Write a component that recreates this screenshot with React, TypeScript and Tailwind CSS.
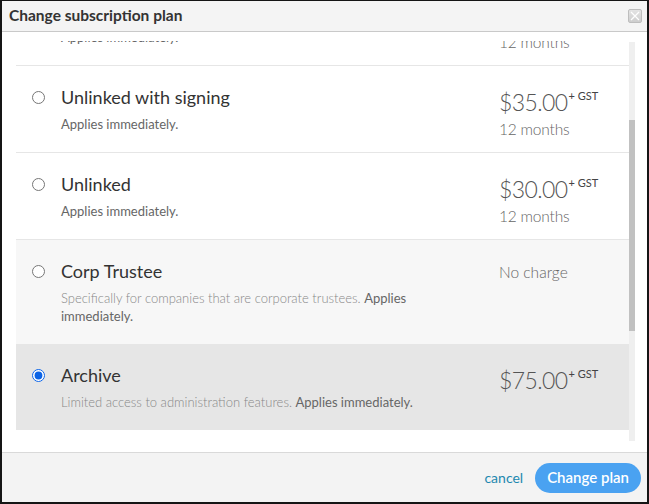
import { useLayoutEffect, useRef } from 'react';

type Plan = {
    id: string;
    name: string;
    description?: string;
    price?: string;
    term?: string;
};

const plans: Plan[] = [
    { id: 'linked-signing', name: 'Linked with signing', price: '$45.00', term: '12 months' },
    { id: 'linked', name: 'Linked', price: '$40.00', term: '12 months' },
    { id: 'unlinked-signing', name: 'Unlinked with signing', price: '$35.00', term: '12 months' },
    { id: 'unlinked', name: 'Unlinked', price: '$30.00', term: '12 months' },
    {
        id: 'corp-trustee',
        name: 'Corp Trustee',
        description: 'Specifically for companies that are corporate trustees.',
    },
    {
        id: 'archive',
        name: 'Archive',
        description: 'Limited access to administration features.',
        price: '$75.00',
    },
    { id: 'deregistered', name: 'Deregistered', price: '$20.00', term: '12 months' },
    { id: 'suspended', name: 'Suspended', description: 'Account is paused.' },
];

const current = 'archive';
const muted = 'corp-trustee';

function PlanRow({ plan }: { plan: Plan }) {
    const selected = plan.id === current;
    const bg = selected ? 'bg-[#e6e6e6]' : plan.id === muted ? 'bg-[#f7f7f7]' : 'bg-white';
    const border = selected || plan.id === muted ? '' : 'border-b border-[#e6e6e6]';

    return (
        <label className={`flex items-start pl-4 pt-[19px] pb-[13px] ${bg} ${border}`}>
            <input
                type="radio"
                name="plan"
                defaultChecked={selected}
                className="m-0 mt-[6px] h-[13px] w-[13px] shrink-0 accent-[#0b63e5]"
            />
            <div className="ml-4 w-[400px] pb-[6px]">
                <p className="text-[18px] leading-6 text-[#333]">{plan.name}</p>
                <p className="mt-[6px] text-[13px] leading-[18px] text-[#666]">
                    {plan.description && (
                        <span className="font-light text-[#888]">{plan.description} </span>
                    )}
                    Applies immediately.
                </p>
            </div>
            <div className="ml-auto mt-[3px] w-[130px] shrink-0 font-light">
                {plan.price ? (
                    <p className="text-[23px] leading-7 tracking-[-0.6px] text-[#555]">
                        {plan.price}
                        <sup className="ml-px align-[6px] text-[11px] font-normal tracking-normal text-[#444]">
                            + GST
                        </sup>
                    </p>
                ) : (
                    <p className="text-[15.5px] leading-5 text-[#666]">No charge</p>
                )}
                {plan.term && (
                    <p className="mt-[3px] text-[15.5px] leading-5 tracking-[-0.2px] text-[#666]">
                        {plan.term}
                    </p>
                )}
            </div>
        </label>
    );
}

export default function App() {
    const listRef = useRef<HTMLDivElement>(null);

    // open with the list scrolled so the current plan is in view
    useLayoutEffect(() => {
        if (listRef.current) listRef.current.scrollTop = 149;
    }, []);

    return (
        <div
            className="flex h-[504px] w-[649px] flex-col border-x-2 border-t border-b-2 border-[#151515] bg-white"
            style={{ fontFamily: 'Lato, "Open Sans", sans-serif' }}
        >
            <header className="flex h-[31px] shrink-0 items-center justify-between border-b border-[#c9c9c9] bg-[#f4f4f4] pl-[7px] pr-[5px]">
                <h2 className="text-[15.5px] font-bold text-[#333]">Change subscription plan</h2>
                <button className="flex h-[14px] w-[14px] items-center justify-center rounded-[2px] border border-[#bdbdbd] bg-gradient-to-b from-[#e4e4e4] to-[#cdcdcd]">
                    <svg viewBox="0 0 10 10" className="h-[10px] w-[10px]">
                        <path d="M1 1L9 9M9 1L1 9" stroke="#fff" strokeWidth="1.2" />
                    </svg>
                </button>
            </header>

            <div className="flex min-h-0 flex-1 pl-[14px] pr-3 pt-[9px] pb-[11px]">
                <div ref={listRef} className="min-w-0 flex-1 overflow-hidden">
                    {plans.map((plan) => (
                        <PlanRow key={plan.id} plan={plan} />
                    ))}
                </div>
                <div className="mt-px w-[6px] shrink-0 bg-[#efefef]">
                    <div className="mt-[78px] h-[211px] bg-[#c1c1c1]" />
                </div>
            </div>

            <footer className="flex h-[50px] shrink-0 items-center justify-end gap-3 border-t border-[#d9d9d9] bg-[#f3f3f3] pr-[6px]">
                <a className="text-[14px] text-[#1d88b0]">cancel</a>
                <button className="h-[30px] rounded-full bg-[#4aa2f1] px-3 text-[15px] font-semibold text-white">
                    Change plan
                </button>
            </footer>
        </div>
    );
}
